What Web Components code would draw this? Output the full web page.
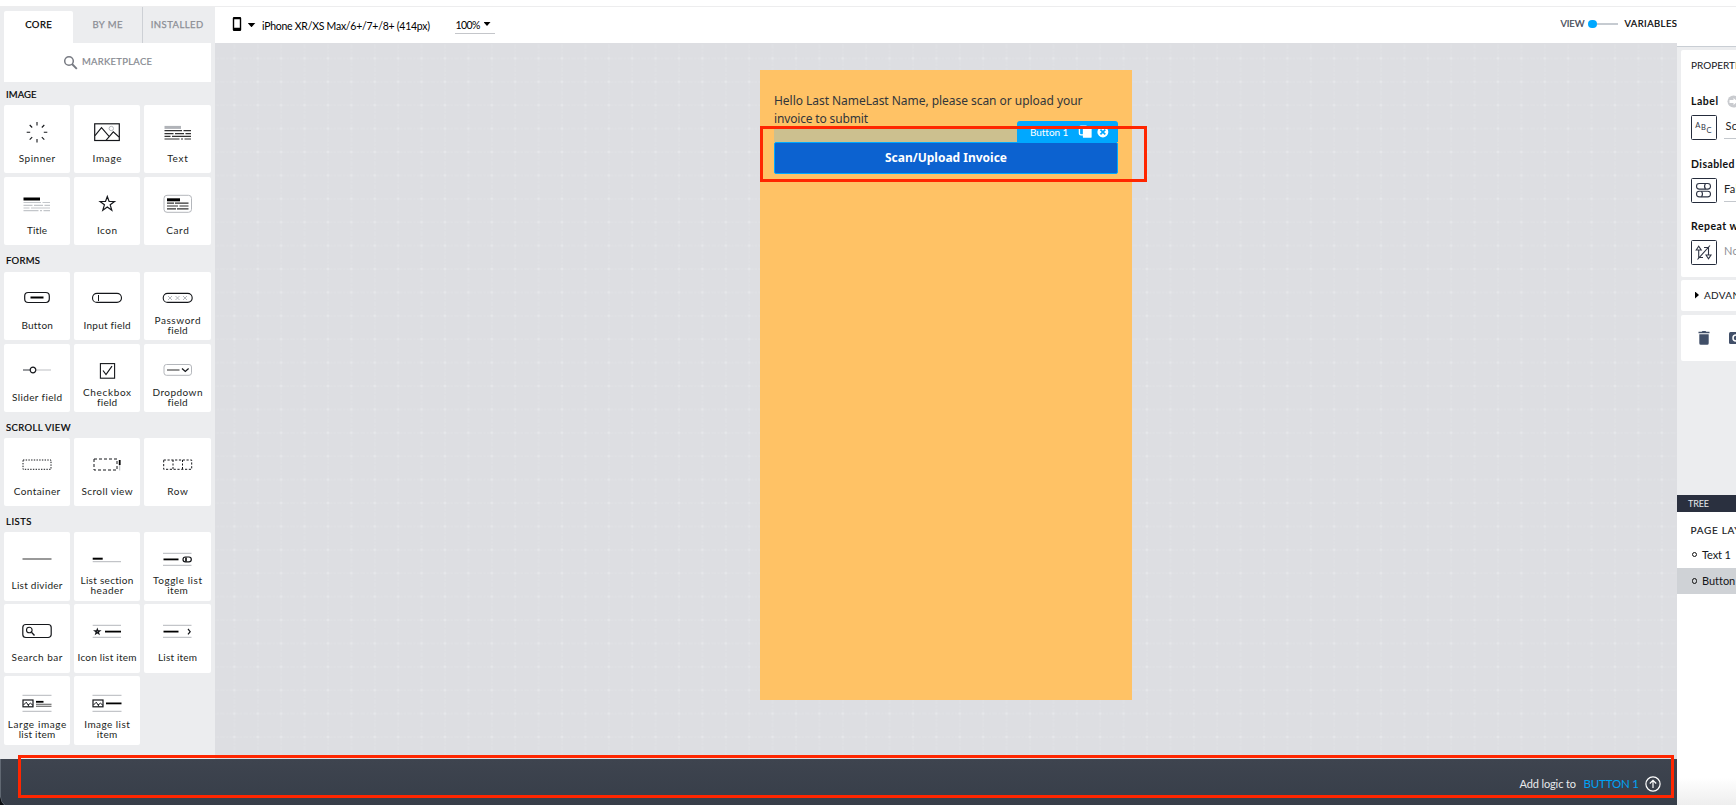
<!DOCTYPE html>
<html lang="en">
<head>
<meta charset="utf-8">
<title>App builder</title>
<style>
html,body{margin:0;padding:0;height:805px;overflow:hidden;background:#fff}
body{font:11px/14px Lato,"Open Sans",sans-serif;color:#14161a}
</style>
</head>
<body>
<app-builder></app-builder>
<script>
const define = (name, css, html, init) => {
  const tpl = document.createElement('template');
  tpl.innerHTML = `<style>*{box-sizing:border-box}${css}</style>${html}`;
  customElements.define(name, class extends HTMLElement {
    connectedCallback() {
      if (this.shadowRoot) return;
      const root = this.attachShadow({ mode: 'open' });
      root.append(tpl.content.cloneNode(true));
      if (init) init.call(this, root);
    }
  });
};

/* A single line of text whose tracking is adjusted to a given width. */
define('track-text', `:host{display:inline-block;white-space:nowrap;flex:none}span{display:inline-block}`,
  `<span><slot></slot></span>`, function (root) {
    const target = parseFloat(this.getAttribute('w'));
    if (!target) return;
    const span = root.querySelector('span');
    const n = this.textContent.length;
    const now = span.getBoundingClientRect().width;
    span.style.letterSpacing = ((target - now) / (n - 1)).toFixed(3) + 'px';
    this.style.width = target + 'px';
  });

const K = 'stroke="#15171b" fill="none"', G = 'stroke="#b4b7bc" fill="none"';
const mini = x => `<g transform="translate(${x} 0)" ${K}><rect x=".5" y="-4" width="10" height="6.8" stroke-width="1.2"/><path d="M1 1 3.8-1.8 6.5 2.5M5.5 1 8-.8 10.4 1.3" stroke-width="1"/></g>`;
const rows = (a, b, c, d, col) => `<g stroke="${col}" stroke-width="1.2"><path d="M-13.5 ${a}H4M5.5 ${a}h7.5M-13.5 ${b}h9M-3 ${b}h9M7.500 ${b}h5.500M-13.500 ${c}h6M-6 ${c}h19M-13.500 ${d}h15M3 ${d}h2M6.500 ${d}h6.500"/></g>`;
const ICONS = {
  spinner: `<path ${K} stroke-width="1.1" d="M0-11v3.500M0 6v3.500M-10.300-.7h3.500M6.800-.7h3.500M-7.300-8l2.500 2.500M4.800 4.200l2.500 2.500M7.300-8l-2.500 2.500M-4.800 4.200l-2.500 2.500"/>`,
  image: `<rect ${K} x="-12.300" y="-9.200" width="24.600" height="16.700" stroke-width="1.200"/><path ${K} stroke-width="1.100" d="M-12 2.700-5.500-5.300 2.500 3.800M-1 7.300 6.300-1.200 12 4"/><circle ${G} cx="4.300" cy="-4.500" r="2.200"/>`,
  text: `<path stroke="#b0b3b8" stroke-width="3" d="M-13.500-5.600H3"/>${rows(-2.300, .7, 3.300, 6, '#333')}`,
  title: `<path stroke="#000" stroke-width="3" d="M-13.500-6H3"/>${rows(-2.500, .3, 3, 5.700, '#c3c6ca')}`,
  star: `<path ${K} stroke-width="1.200" d="M.3-8.500 2.100-3.500H7.500L3.200-.2 4.800 5.300.3 2-4.200 5.300-2.600-.2-6.900-3.500h5.400z"/>`,
  card: `<rect ${G} x="-14" y="-9.700" width="27.500" height="17" rx="3" stroke="#a9acb3"/><path stroke="#000" stroke-width="3" d="M-11-5.200H2"/><path stroke="#333" stroke-width="1.200" d="M-11-1.800h7M-3-1.800H10.500M-11 1h11M1.500 1h9M-11 3.800h9M-1 3.800h11.500"/>`,
  button: `<rect ${K} x="-12.300" y="-7.500" width="24.600" height="10" rx="3.500" stroke-width="1.200"/><path d="M-6.500-2.500h13" stroke="#000" stroke-width="2"/>`,
  input: `<rect ${K} x="-14.500" y="-6.600" width="29" height="9" rx="4.500" stroke-width="1.100"/><path ${K} d="M-8.500-5v6"/>`,
  password: `<rect ${K} x="-14.800" y="-6.600" width="29" height="9" rx="4.500" stroke-width="1.100"/><path ${G} d="M-10-4l4 4m0-4l-4 4M-2.500-4l4 4m0-4l-4 4M5-4l4 4m0-4l-4 4"/>`,
  slider: `<path stroke="#55585e" stroke-width="1.200" d="M-14-2h7"/><path stroke="#c8cacd" stroke-width="1.200" d="M-1-2h15"/><circle ${K} cx="-4" cy="-2" r="2.800" stroke-width="1.200"/>`,
  checkbox: `<rect ${K} x="-6.600" y="-8.400" width="14.200" height="14.600" stroke-width="1.100"/><path ${K} stroke-width="1.200" d="M-4-1.500-1 2.500 5-5.800"/>`,
  dropdown: `<rect ${G} x="-14" y="-7.500" width="27.500" height="10.800" rx="2.500" stroke="#a9acb3"/><path stroke="#666" stroke-width="1.400" d="M-11-2H1.500"/><path ${K} stroke-width="1.300" d="M4-3.500 7.300-.6 10.600-3.500"/>`,
  container: `<rect ${K} x="-14" y="-6" width="28" height="9.300" stroke-dasharray="1.400 1.300"/>`,
  scroll: `<rect ${K} x="-13" y="-7" width="23" height="11" stroke-dasharray="3 2"/><path d="M12.700-6v5" stroke="#000" stroke-width="1.800"/><path d="M12.700-1v5.500" stroke="#b4b7bc"/>`,
  row: `<rect ${K} x="-14.300" y="-6" width="28" height="9.300" stroke-dasharray="2.200 1.600"/><path ${K} stroke-dasharray="2 1.500" d="M-5-6v9.300M4.500-6v9.300"/>`,
  divider: `<path stroke="#777" stroke-width="1.500" d="M-14.500-1h29"/>`,
  section: `<path stroke="#000" stroke-width="2" d="M-14.300-1.300h10"/><path ${G} d="M-14.300 1.700H14"/>`,
  toggle: `<path ${G} d="M-15-6.700H13.500M-15 5.300H13.500"/><path stroke="#000" stroke-width="1.800" d="M-14.500-.6H.5"/><rect ${K} x="5" y="-3" width="8.300" height="4.800" rx="2.400" stroke-width="1.200"/><path stroke="#000" stroke-width="1.600" d="M8-2.500v4"/>`,
  search: `<rect ${K} x="-14.200" y="-7.500" width="28.400" height="13" rx="3" stroke-width="1.200"/><circle ${K} cx="-7.700" cy="-2" r="2.800" stroke-width="1.100"/><path ${K} stroke-width="1.300" d="M-5.500.2-2.500 3.500"/>`,
  iconitem: `<path ${G} d="M-14.300-6.700H14M-14.300 5.300H14"/><path ${K} stroke-width="1.300" d="M-9.700-2.700-9.100-1.100H-7.300L-8.700 0-8.200 1.700-9.700.7-11.200 1.700-10.700 0-12.100-1.100h1.800z"/><path stroke="#000" stroke-width="1.800" d="M-2-.4H14"/>`,
  listitem: `<path ${G} d="M-15-6.700H13.500M-15 5.300H13.500"/><path stroke="#000" stroke-width="1.800" d="M-14.500-.4H.5"/><path ${K} stroke-width="1.200" d="M10-3 12.200-.3 10 2.400"/>`,
  largeimg: `<path ${G} d="M-14.500-8.700H14.500M-14.500 7.300H14.500"/>${mini(-14.500)}<path stroke="#000" stroke-width="1.800" d="M-1-2.200H6.500"/><path stroke="#555" stroke-width="1.100" d="M-1 .2H14.500M-1 2.300H14.500"/>`,
  imgitem: `<path ${G} d="M-14.500-8.700H14.500M-14.500 7.300H14.500"/>${mini(-14.500)}<path stroke="#000" stroke-width="1.800" d="M-1-.6H14.500"/>`
};

define('component-card', `
  :host{display:flex;flex-direction:column;align-items:center;background:#fff;border-radius:2px;padding-top:8px}
  svg{display:block;flex:none}
  div{flex:none;margin-top:-7px;height:24px;display:flex;flex-direction:column;justify-content:center;align-items:center;line-height:10.500px;font-size:10px;color:#1c1e22}`,
  `<svg width="40" height="40" viewBox="-20 -20 40 40"></svg><div></div>`, function (root) {
    root.querySelector('svg').innerHTML = ICONS[this.getAttribute('icon')];
    root.querySelector('div').innerHTML = this.getAttribute('label').split('|').map(s => {
      const [t, w] = s.split(':'); return `<track-text w="${w}">${t}</track-text>`;
    }).join('');
  });

define('component-group', `
  :host{display:block}
  header{display:flex;align-items:center;padding:var(--drop,3px) 0 0 2px;height:var(--head,20px);font-size:9.500px;color:#000;-webkit-text-stroke:.2px #000}
  section{display:grid;grid-template-columns:66px 66px 67px;grid-auto-rows:var(--row,68px);gap:var(--gap,4px) 4px}`,
  `<header></header><section><slot></slot></section>`, function (root) {
    root.querySelector('header').innerHTML = `<track-text w="${this.getAttribute('w')}">${this.getAttribute('name')}</track-text>`;
  });

define('side-bar', `
  :host{display:flex;flex-direction:column;width:215px;height:752px;background:#ecedef;padding:0 4px}
  nav{display:flex;height:36px;padding-top:4px;font-size:9.500px;color:#8b8e95;-webkit-text-stroke:.25px;flex:none}
  nav div{display:flex;align-items:center;justify-content:center;padding-bottom:5px}
  nav .on{width:69px;background:#fff;color:#000;border-radius:2px 2px 0 0}
  nav .me{width:69px}
  nav .in{width:69px;border-left:1px solid #cdd0d5;margin-top:-4px;padding-top:4px}
  .mk{display:flex;align-items:center;height:39px;background:#fff;padding:0 0 1px 59px;gap:4px;font-size:9.500px;color:#85888f;-webkit-text-stroke:.2px;flex:none}`,
  `<nav><div class="on"><track-text w="26.500">CORE</track-text></div><div class="me"><track-text w="30">BY ME</track-text></div><div class="in"><track-text w="52.500">INSTALLED</track-text></div></nav>
   <div class="mk"><svg width="15" height="15" viewBox="0 0 15 15" fill="none" stroke="#777a82"><circle cx="6" cy="6" r="4.300" stroke-width="1.500"/><path d="M9 9l4.800 4.800" stroke-width="1.900"/></svg><track-text w="70">MARKETPLACE</track-text></div>
   <component-group name="IMAGE" w="30.500" style="--head:23px;--drop:2px">
     <component-card icon="spinner" label="Spinner:36.500"></component-card><component-card icon="image" label="Image:29"></component-card><component-card icon="text" label="Text:20.500"></component-card>
     <component-card icon="title" label="Title:20"></component-card><component-card icon="star" label="Icon:20"></component-card><component-card icon="card" label="Card:22.500"></component-card>
   </component-group>
   <component-group name="FORMS" w="34" style="--head:27px;--drop:4px">
     <component-card icon="button" label="Button:31"></component-card><component-card icon="input" label="Input field:47"></component-card><component-card icon="password" label="Password:46|field:20"></component-card>
     <component-card icon="slider" label="Slider field:50"></component-card><component-card icon="checkbox" label="Checkbox:48|field:20"></component-card><component-card icon="dropdown" label="Dropdown:50|field:20"></component-card>
   </component-group>
   <component-group name="SCROLL VIEW" w="64.500" style="--head:26px;--drop:5px">
     <component-card icon="container" label="Container:46.500"></component-card><component-card icon="scroll" label="Scroll view:51"></component-card><component-card icon="row" label="Row:20.500"></component-card>
   </component-group>
   <component-group name="LISTS" w="25.500" style="--head:26px;--drop:5px;--row:69px;--gap:3px">
     <component-card icon="divider" label="List divider:51"></component-card><component-card icon="section" label="List section:53|header:33"></component-card><component-card icon="toggle" label="Toggle list:49|item:20.500"></component-card>
     <component-card icon="search" label="Search bar:51"></component-card><component-card icon="iconitem" label="Icon list item:59"></component-card><component-card icon="listitem" label="List item:39"></component-card>
     <component-card icon="largeimg" label="Large image:58.500|list item:36.500"></component-card><component-card icon="imgitem" label="Image list:45.500|item:20.500"></component-card>
   </component-group>`);

define('tool-bar', `
  :host{display:flex;height:36px;background:#fff;align-items:center;padding:0 0 0 16.500px;font-size:10.500px;color:#000}
  .caret{width:8px;height:4.500px;background:#000;clip-path:polygon(0 0,100% 0,50% 100%);flex:none}
  .zoom{display:flex;align-items:center;gap:3px;border-bottom:1px solid #c4c6ca;height:18px;width:40px;margin-left:24.500px;padding:0 0 1px 1px}
  .view{display:flex;align-items:center;margin-left:auto;font-size:9.500px;-webkit-text-stroke:.2px;padding-bottom:2px}
  .view .a{color:#3c4352}
  .dot{width:8.500px;height:8.500px;border-radius:50%;background:#00a8ff;margin-left:3.500px}
  .bar{width:21px;height:1.500px;background:#c6cbd1;margin-right:7px}`,
  `<svg width="10" height="16" viewBox="0 0 10 16" style="margin-bottom:3px"><path fill="#000" fill-rule="evenodd" d="M2 1h6q1.200 0 1.200 1.200v11.600Q9.200 15 8 15H2Q.8 15 .8 13.800V2.200Q.8 1 2 1zM2.200 3.200v8.600h5.600V3.200z"/></svg>
   <div class="caret" style="margin:0 6.500px 0 6px"></div><track-text w="168" style="padding-top:1px">iPhone XR/XS Max/6+/7+/8+ (414px)</track-text>
   <div class="zoom"><track-text w="25" style="padding-top:1px">100%</track-text><div class="caret" style="width:7px;height:4px"></div></div>
   <div class="view"><track-text class="a" w="24">VIEW</track-text><div class="dot"></div><div class="bar"></div><track-text w="52.500">VARIABLES</track-text></div>`);

define('phone-preview', `
  :host{display:block;position:relative;width:372px;height:630px;background:#ffc265;padding:22px 14px 0;font:12px/18px "Noto Sans","Open Sans",sans-serif;color:#32363a}
  .strip{height:15px;width:344px;background:#ccc08f;margin-top:-1px}
  .copy{display:flex;flex-direction:column;height:36px}
  .btn{height:32px;background:#0c62d0;border:1px solid #00a8ff;border-radius:2px;display:flex;align-items:center;justify-content:center;color:#fff;font-weight:700}
  .tag{position:absolute;right:14px;top:51px;width:101px;height:21px;background:#00a8ff;border-radius:3px 3px 0 0;display:flex;align-items:center;padding-left:13px;color:#fff;font:10px/14px Lato,sans-serif}
  .mark{position:absolute;left:0;top:56px;width:387px;height:56px;border:3px solid #ff2600}`,
  `<div class="copy"><track-text w="308.500">Hello Last NameLast Name, please scan or upload your</track-text><track-text w="94">invoice to submit</track-text></div>
   <div class="strip"></div><div class="btn"><track-text w="122">Scan/Upload Invoice</track-text></div>
   <div class="tag"><track-text w="38">Button 1</track-text><svg width="42" height="18" viewBox="0 0 42 18" style="margin-left:9px"><rect x="2.500" y="3" width="8" height="9" rx="1.500" fill="none" stroke="#fff" stroke-width="1.400"/><rect x="6" y="5.500" width="9" height="9.500" rx="1" fill="#fff"/><circle cx="26.500" cy="9" r="5.600" fill="#fff"/><path d="M24 6.500l5 5m0-5l-5 5" stroke="#00a8ff" stroke-width="1.700"/></svg></div>
   <div class="mark"></div>`);

define('design-canvas', `
  :host{display:flex;height:716px;padding:27px 0 0 545px;background:#dddee2;position:relative;overflow:hidden}
  .grid{position:absolute;inset:0}`,
  `<svg class="grid" width="1462" height="716"><defs><pattern id="g" width="23.400" height="23.400" x="7.700" y="3.700" patternUnits="userSpaceOnUse"><path d="M0 11.700H23.400M11.700 0V23.400" stroke="#e3e4e7" stroke-width=".7" stroke-dasharray="2 1.500" fill="none"/><path d="M10.200 11.700h3M11.700 10.200v3" stroke="#e8e9ec" stroke-width="1"/></pattern></defs><rect width="1462" height="716" fill="url(#g)"/></svg><phone-preview></phone-preview>`);

define('logic-bar', `
  :host{display:flex;height:46px;width:1677px;background:linear-gradient(#3e444f,#373e49);align-items:center;justify-content:flex-end;padding:3px 16px 0 0;color:#e8eaed;font-size:11px;position:relative}
  .mark{position:absolute;left:18px;top:-4px;width:1656px;height:43px;border:3px solid #ff2600}
  .b{color:#00a2f5;font-size:11.500px;margin:0 6px 0 7.500px}
  .corner{position:absolute;left:0;bottom:0}`,
  `<svg class="corner" width="8" height="46" viewBox="0 0 8 46"><path d="M.5 0v38q0 5 4 8" fill="none" stroke="#6b727c" stroke-width=".8"/><path d="M0 38v8h4Q.8 43 0 38" fill="#0c0e12"/></svg><track-text w="56.500">Add logic to</track-text><track-text class="b" w="55.500">BUTTON 1</track-text>
   <svg width="16" height="16" viewBox="0 0 16 16" fill="none" stroke="#fff" stroke-width="1.200"><circle cx="8" cy="8" r="7.100"/><path d="M8 12V4.500M4.800 7.500 8 4.300l3.200 3.200"/></svg><div class="mark"></div>`);

define('prop-field', `
  :host{display:block;height:62.700px;padding-left:10px}
  .h{display:flex;align-items:center;gap:9px;height:16px;font-weight:700;font-size:10.500px;color:#111}
  .r{display:flex;gap:7px;margin-top:6px}
  .ic{width:26px;height:25px;border:1.500px solid #252c3c;border-radius:1.500px;flex:none;display:block}
  .v{flex:none;width:60px;height:24px;border-bottom:1px solid #c4c8cd;font-size:11px;letter-spacing:.3px;padding:4px 0 0 0;color:var(--vc,#222)}
  :host([plain]) .v{border:0}`,
  `<div class="h"><div class="l"></div><slot name="badge"></slot></div><div class="r"><div class="ic"><slot></slot></div><div class="v"></div></div>`, function (root) {
    root.querySelector('.l').innerHTML = `<track-text w="${this.getAttribute('w')}">${this.getAttribute('label')}</track-text>`;
    root.querySelector('.v').textContent = this.getAttribute('value');
    if (this.hasAttribute('indent')) root.querySelector('.v').style.textIndent = '1.5px';
  });

define('properties-panel', `
  :host{display:block;width:59px;height:798px;background:#fff;overflow:hidden;white-space:nowrap}
  svg{display:block}
  .top{height:40px;border-bottom:1px solid #c9ced4}
  .bg{background:#ecedef;height:448px;padding:3px 0 0 4px;display:flex;flex-direction:column}
  .box{background:#fff;border-radius:2px 0 0 2px;width:80px}
  .p{height:227px;margin-bottom:3px}
  .t{height:30px;padding:8px 0 0 10px;font-size:10px;margin-bottom:13px}
  .adv{height:31px;margin-bottom:4px;display:flex;align-items:center;padding:0 0 1px 14px;gap:5px;font-size:10px}
  .act{height:46px;display:flex;align-items:center;padding-left:17px;gap:19px}
  .tri{width:4px;height:7px;background:#000;clip-path:polygon(0 0,100% 50%,0 100%)}
  .tree{height:17px;background:#2a303f;color:#e6e8ec;font-size:9px;line-height:17px;padding-left:11px}
  .pl{height:33px;padding:11px 0 0 13.500px;font-size:10px;-webkit-text-stroke:.15px}
  .node{height:26px;display:flex;align-items:center;gap:5px;padding-left:14.500px;font-size:11px}
  .node i{width:5.500px;height:5.500px;border:1.200px solid #111;border-radius:50%;flex:none}
  .on{background:#cfd2d6}
  .fade{height:211px;background:linear-gradient(#fff 87%,#eee)}`,
  `<div class="top"></div><div class="bg">
    <div class="box p"><div class="t"><track-text w="58">PROPERTIES</track-text></div>
      <prop-field label="Label" w="27" value="Scan/Upload" indent><svg slot="badge" width="13" height="13" viewBox="0 0 13 13"><circle cx="6.500" cy="6.500" r="6" fill="#c9cbcf"/><path d="M2.500 5h4V3l4 3.500-4 3.500V8h-4z" fill="#fff"/></svg><svg width="23" height="22" viewBox="0 0 23 22" font-family="Lato" font-size="7.500" fill="#2e3444"><text x="3.200" y="11.500">A</text><text x="9" y="14">B</text><text x="14.500" y="16.500">C</text></svg></prop-field>
      <prop-field label="Disabled" w="43.500" value="False"><svg width="23" height="22" viewBox="0 0 23 22" fill="none" stroke="#2e3444" stroke-width="1.100"><rect x="4.500" y="4.500" width="14" height="5.600" rx="2.800"/><rect x="4.500" y="12.300" width="14" height="5.600" rx="2.800"/><path d="M13.500 4.500q-2 2.800 0 5.600M9.500 12.300q2 2.800 0 5.600"/></svg></prop-field>
      <prop-field label="Repeat with" w="61" value="None" plain style="--vc:#8e9197"><svg width="23" height="22" viewBox="0 0 23 22" fill="none" stroke="#2e3444" stroke-width="1.100"><path d="M4.200 9 6.700 5.200 9.200 9zM6.700 9v7.500H11M14 14l2.500 3.800L19 14zM16.500 14V6.500H12M5.500 18.500 18 4.500"/></svg></prop-field></div>
    <div class="box adv"><div class="tri"></div><track-text w="57">ADVANCED</track-text></div>
    <div class="box act"><svg width="12" height="16" viewBox="0 0 12 16" fill="#414f68"><path d="M.5 1.700h3.200L4.500 1h3l.8.700h3.200v1.500H.5zM1.300 4.200h9.400v9q0 1.500-1.500 1.500H2.800q-1.500 0-1.500-1.500z"/></svg><svg width="16" height="14" viewBox="0 0 16 14"><rect y="1" width="16" height="12" rx="1.500" fill="#414f68"/><circle cx="7" cy="7" r="3" fill="none" stroke="#fff" stroke-width="1.500"/></svg></div>
   </div>
   <div class="tree"><track-text w="21">TREE</track-text></div><div class="pl"><track-text w="73">PAGE LAYOUT</track-text></div>
   <div class="node" style="height:23px;padding-bottom:4px;"><i></i><track-text w="29">Text 1</track-text></div><div class="node on"><i></i><track-text w="42">Button 1</track-text></div><div class="fade"></div>`);

define('app-builder', `
  :host{display:block;width:1736px;height:805px;background:#fff}
  .rule{height:7px;border-bottom:1px solid #ededee}
  .main{display:grid;grid-template-columns:1677px 59px;height:798px}
  .work{display:grid;grid-template-columns:215px 1462px;height:752px}
  .left{background:#fff}`,
  `<div class="rule"></div><div class="main"><div class="left"><div class="work"><side-bar></side-bar><div><tool-bar></tool-bar><design-canvas></design-canvas></div></div><logic-bar></logic-bar></div><properties-panel></properties-panel></div>`);
</script>
</body>
</html>
